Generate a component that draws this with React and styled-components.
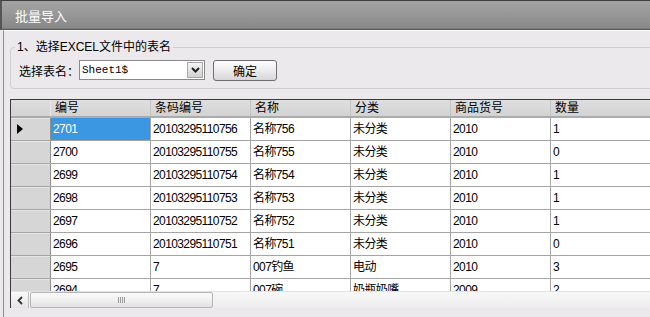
import React from 'react'
import styled, { createGlobalStyle } from 'styled-components'

const GlobalStyle = createGlobalStyle`
  body {
    margin: 0;
    background: #ebe9eb;
    font-family: "Liberation Sans", "Noto Sans CJK SC", sans-serif;
    font-size: 12px;
    color: #000;
  }
`

const columns = ['编号', '条码编号', '名称', '分类', '商品货号', '数量']

const rows = [
  ['2701', '20103295110756', '名称756', '未分类', '2010', '1'],
  ['2700', '20103295110755', '名称755', '未分类', '2010', '0'],
  ['2699', '20103295110754', '名称754', '未分类', '2010', '1'],
  ['2698', '20103295110753', '名称753', '未分类', '2010', '1'],
  ['2697', '20103295110752', '名称752', '未分类', '2010', '1'],
  ['2696', '20103295110751', '名称751', '未分类', '2010', '0'],
  ['2695', '7', '007钓鱼', '电动', '2010', '3'],
  ['2694', '7', '007碗', '奶瓶奶嘴', '2009', '2'],
]

export default function App() {
  return (
    <>
      <GlobalStyle />
      <Window>
        <TitleBar>批量导入</TitleBar>
        <Body>
          <Group>
            <legend>1、选择EXCEL文件中的表名</legend>
            <FormRow>
              <Label>选择表名：</Label>
              <Combo>
                <span className="value">Sheet1$</span>
                <span className="drop">
                  <svg width="9" height="6" viewBox="0 0 9 6">
                    <path d="M1 1 L4.5 4.5 L8 1" fill="none" stroke="#222" strokeWidth="2" />
                  </svg>
                </span>
              </Combo>
              <Button>确定</Button>
            </FormRow>
          </Group>

          <Grid>
            <HeadRow>
              <HeadCell $corner />
              {columns.map((c) => (
                <HeadCell key={c}>{c}</HeadCell>
              ))}
            </HeadRow>
            <Rows>
              {rows.map((r, i) => (
                <Row key={r[0]}>
                  <RowHeader>
                    {i === 0 && (
                      <svg width="6" height="10" viewBox="0 0 6 10">
                        <path d="M0 0 L6 5 L0 10 Z" fill="#000" />
                      </svg>
                    )}
                  </RowHeader>
                  {r.map((v, j) => (
                    <Cell key={j} $selected={i === 0 && j === 0}>
                      {v}
                    </Cell>
                  ))}
                </Row>
              ))}
            </Rows>
            <HScroll>
              <div className="arrow">
                <svg width="6" height="9" viewBox="0 0 6 9">
                  <path d="M5 1 L1.5 4.5 L5 8" fill="none" stroke="#333" strokeWidth="1.8" />
                </svg>
              </div>
              <div className="thumb">
                <span className="grip" />
              </div>
              <div className="track" />
            </HScroll>
          </Grid>
        </Body>
      </Window>
    </>
  )
}

const Window = styled.div`
  width: 650px;
  height: 317px;
  overflow: hidden;
  display: flex;
  flex-direction: column;
  background: #ebe9eb;
`

const TitleBar = styled.div`
  height: 28px;
  flex: none;
  display: flex;
  align-items: center;
  padding-left: 13px;
  color: #fff;
  font-size: 13px;
  background: linear-gradient(#a3a3a3, #9a9a9a 40%, #878787);
  border-top: 1px solid #3e3e3e;
  border-bottom: 1px solid #5c5c5c;
  border-left: 2px solid #555;
  box-shadow: inset 0 -1px 0 #7a7a7a;
`

const Body = styled.div`
  flex: 1;
  margin-left: 3px;
  border-left: 1px solid #8c8c8c;
  border-top: 1px solid #fafafa;
  padding-left: 6px;
`

const Group = styled.fieldset`
  box-sizing: border-box;
  width: 720px;
  margin: 8px 0 0 0;
  padding: 5px 8px 8px 8px;
  border: 1px solid #cfcfcf;
  border-radius: 4px;
  legend {
    font-size: 12px;
    line-height: 16px;
    padding: 0 2px;
    margin-left: -4px;
  }
`

const FormRow = styled.div`
  display: flex;
  align-items: center;
  height: 20px;
`

const Label = styled.span`
  width: 60px;
  flex: none;
`

const Combo = styled.div`
  box-sizing: border-box;
  width: 126px;
  height: 20px;
  display: flex;
  align-items: stretch;
  background: #fff;
  border: 1px solid #8a8a8a;
  .value {
    flex: 1;
    padding-left: 2px;
    font-family: "Liberation Mono", monospace;
    font-size: 11px;
    line-height: 18px;
  }
  .drop {
    width: 16px;
    margin: 1px;
    display: flex;
    align-items: center;
    justify-content: center;
    background: linear-gradient(#f4f4f4, #d2d2d2);
    border: 1px solid #a9a9a9;
    box-sizing: border-box;
  }
`

const Button = styled.button`
  box-sizing: border-box;
  margin-left: 8px;
  width: 64px;
  height: 21px;
  padding: 0;
  font-family: "Liberation Sans", "Noto Sans CJK SC", sans-serif;
  font-size: 12px;
  color: #000;
  background: linear-gradient(#fdfdfd, #ececec 50%, #d6d6d6);
  border: 1px solid #707070;
  border-radius: 3px;
`

const Grid = styled.div`
  margin-top: 10px;
  width: 720px;
  height: 209px;
  box-sizing: border-box;
  border: 1px solid #3a3a3a;
  background: #fff;
  display: flex;
  flex-direction: column;
`

const gridCols = '40px repeat(6, 100px)'

const HeadRow = styled.div`
  display: grid;
  grid-template-columns: ${gridCols};
  height: 18px;
  flex: none;
  background: linear-gradient(#dedede, #d3d3d3);
  border-bottom: 2px solid #ababab;
  box-sizing: border-box;
`

const HeadCell = styled.div`
  padding-left: ${(p) => (p.$corner ? 0 : 4)}px;
  line-height: 16px;
  border-right: 1px solid ${(p) => (p.$corner ? '#e8e8e8' : '#c4c4c4')};
  white-space: nowrap;
`

const Rows = styled.div`
  height: 173px;
  flex: none;
  overflow: hidden;
`

const Row = styled.div`
  display: grid;
  grid-template-columns: ${gridCols};
  height: 23px;
  box-sizing: border-box;
  border-bottom: 1px solid #a5a5a5;
`

const RowHeader = styled.div`
  background: #d6d6d6;
  border-right: 1px solid #8f8f8f;
  box-shadow: inset 0 1px 0 #e6e6e6;
  display: flex;
  align-items: center;
  padding-left: 6px;
`

const Cell = styled.div`
  padding-left: 2px;
  line-height: 22px;
  border-right: 1px solid #a5a5a5;
  white-space: nowrap;
  overflow: hidden;
  letter-spacing: -0.6px;
  background: ${(p) => (p.$selected ? '#3c97e3' : '#fff')};
  color: ${(p) => (p.$selected ? '#fff' : '#000')};
`

const HScroll = styled.div`
  height: 17px;
  flex: none;
  display: flex;
  background: linear-gradient(#f8f8f8, #ededed);
  border-top: 1px solid #e2e2e2;
  box-sizing: border-box;
  .arrow {
    width: 17px;
    display: flex;
    align-items: center;
    justify-content: center;
    background: linear-gradient(#fafafa, #e4e4e4);
    border-right: 1px solid #bdbdbd;
  }
  .thumb {
    width: 183px;
    box-sizing: border-box;
    margin-left: 1px;
    display: flex;
    align-items: center;
    justify-content: center;
    background: linear-gradient(#fbfbfb, #f0f0f0 50%, #e2e2e2);
    border: 1px solid #b5b5b5;
    border-radius: 2px;
  }
  .grip {
    width: 8px;
    height: 6px;
    background: repeating-linear-gradient(90deg, #9a9a9a 0 1px, transparent 1px 2px);
  }
  .track {
    flex: 1;
  }
`
